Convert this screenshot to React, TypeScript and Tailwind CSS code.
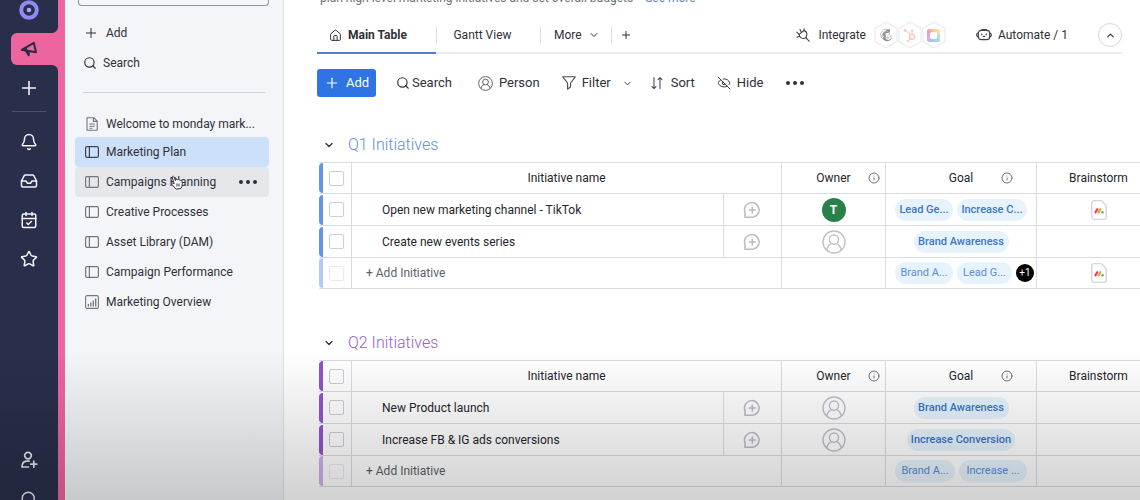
import type { ReactNode } from "react";
import {
  Bell,
  CalendarCheck,
  ChevronDown,
  ChevronUp,
  EyeOff,
  House,
  Inbox,
  Info,
  Plus,
  Search,
  Star,
} from "lucide-react";
import { FaHubspot, FaMailchimp } from "react-icons/fa";

type Goal = { label: string; width: string };

type Item = {
  name: string;
  owner?: string;
  goals: Goal[];
  doc?: boolean;
};

type Group = {
  title: string;
  titleColor: string;
  bar: string;
  barFaded: string;
  items: Item[];
  summary: Goal[];
  extra?: string;
  summaryDoc?: boolean;
};

const GROUPS: Group[] = [
  {
    title: "Q1 Initiatives",
    titleColor: "text-[#5c8fe6]",
    bar: "bg-[#6494e6]",
    barFaded: "bg-[#b1cbf8]",
    items: [
      {
        name: "Open new marketing channel - TikTok",
        owner: "T",
        goals: [
          { label: "Lead Ge...", width: "w-[58px]" },
          { label: "Increase C...", width: "w-[70px]" },
        ],
        doc: true,
      },
      {
        name: "Create new events series",
        goals: [{ label: "Brand Awareness", width: "w-[95px]" }],
      },
    ],
    summary: [
      { label: "Brand A...", width: "w-[58px]" },
      { label: "Lead G...", width: "w-[55px]" },
    ],
    extra: "+1",
    summaryDoc: true,
  },
  {
    title: "Q2 Initiatives",
    titleColor: "text-[#9560cf]",
    bar: "bg-[#8f55cb]",
    barFaded: "bg-[#cdb0ea]",
    items: [
      {
        name: "New Product launch",
        goals: [{ label: "Brand Awareness", width: "w-[95px]" }],
      },
      {
        name: "Increase FB & IG ads conversions",
        goals: [{ label: "Increase Conversion", width: "w-[108px]" }],
      },
    ],
    summary: [
      { label: "Brand A...", width: "w-[60px]" },
      { label: "Increase ...", width: "w-[68px]" },
    ],
  },
];

function MegaphoneIcon() {
  return (
    <svg width="18" height="18" viewBox="0 0 18 18" fill="none" stroke="#2b2b45" strokeWidth="2" strokeLinejoin="round" strokeLinecap="round">
      <path d="M1.8 9.8 13.8 2.8 16 12.2Z" />
      <path d="M6.3 11.5 8.7 15.2 8.8 11.8" />
      <path d="M1.8 9.8 6.2 7.2 7 11Z" fill="#2b2b45" strokeWidth="1" />
    </svg>
  );
}

function UserAddIcon() {
  return (
    <svg width="18" height="18" viewBox="0 0 18 18" fill="none" stroke="#e6e7ee" strokeWidth="1.7" strokeLinecap="round" strokeLinejoin="round">
      <circle cx="8" cy="4.6" r="3.3" />
      <path d="M8.5 16H2c0-3.4 1.6-5.7 4.6-5.9h2.6M13.8 10.2v6M10.8 13.2h6" />
    </svg>
  );
}

function BoardIcon({ active }: { active?: boolean }) {
  return (
    <svg width="14" height="12" viewBox="0 0 14 12" fill="none" stroke={active ? "#3a4152" : "#73767f"} strokeWidth="1.2">
      <rect x=".6" y=".6" width="12.8" height="10.8" rx="1.3" />
      <path d="M4.4.6v10.8" />
    </svg>
  );
}

function DocIcon() {
  return (
    <svg width="14" height="14" viewBox="0 0 14 14" fill="none" stroke="#73767f" strokeWidth="1.1" strokeLinejoin="round">
      <path d="M2 .7h6.6L12.2 4v9.3H2ZM8.4.9v3.5H12M4.4 7h5.4M4.4 9.2h5.4M4.4 11.2h3" />
    </svg>
  );
}

function DashboardIcon() {
  return (
    <svg width="14" height="14" viewBox="0 0 14 14" fill="none" stroke="#73767f" strokeWidth="1.1">
      <rect x=".6" y=".6" width="12.8" height="12.8" rx="1.5" />
      <path d="M3.4 11.4V9M5.8 11.4V7.4M8.3 11.4V5.4M10.7 11.4V3.4" strokeWidth="1.3" />
    </svg>
  );
}

function PersonIcon({ size, color }: { size: number; color: string }) {
  return (
    <svg width={size} height={size} viewBox="0 0 24 24" fill="none" stroke={color} strokeWidth="1.4">
      <circle cx="12" cy="12" r="11" />
      <circle cx="12" cy="9.6" r="4.6" />
      <path d="M4.8 20.2c.6-3.4 2.3-5.6 4.8-6.5M19.2 20.2c-.6-3.4-2.3-5.6-4.8-6.5" />
    </svg>
  );
}

function FilterIcon() {
  return (
    <svg width="14" height="14" viewBox="0 0 14 14" fill="none" stroke="#4b4d55" strokeWidth="1.1" strokeLinejoin="round">
      <path d="M.8.8h12.4L8.6 7v3.8L5.6 13.2V7Z" />
    </svg>
  );
}

function SortIcon() {
  return (
    <svg width="12" height="14" viewBox="0 0 12 14" fill="none" stroke="#4b4d55" strokeWidth="1.1" strokeLinecap="round" strokeLinejoin="round">
      <path d="M3 1.6v10.8M1 10.6l2 1.9 2-1.9M9 12.6V1.8M7 3.6l2-2 2 2" />
    </svg>
  );
}

function PlugIcon() {
  return (
    <svg width="14" height="14" viewBox="0 0 14 14" fill="none" stroke="#3f4149" strokeWidth="1.1" strokeLinecap="round" strokeLinejoin="round">
      <path d="M10 9.8 13.2 13.2" />
      <path d="M3.2 6.4 7.8 2.6c2.4.4 3.4 2.2 3 4.2L10 9.8c-1.800.9-3.400 1-4.800.1C3.900 9 3.200 7.800 3.200 6.400Z" />
      <path d="M4 1.400 5.400 4.400M.8 4.200 3.200 6.400M1 9.200 3.600 8.200M7.800 2.600 8.200.8" />
    </svg>
  );
}

function RobotIcon() {
  return (
    <svg width="16" height="12" viewBox="0 0 16 12" fill="none" stroke="#3f4149" strokeWidth="1.2" strokeLinecap="round">
      <rect x="2.3" y="1.3" width="11.4" height="9.4" rx="3" />
      <path d="M2.2 4.2C.9 4.4.7 5 .7 6s.2 1.6 1.5 1.8M13.8 4.2c1.3.2 1.5.8 1.5 1.8s-.2 1.6-1.5 1.8M5 1.2c.6-.6 1.2-.6 2-.6h2c.8 0 1.4 0 2 .6" />
      <path d="M5.7 5v.8M10.3 5v.8M7.3 7.3h1.4" />
    </svg>
  );
}

function CommentIcon() {
  return (
    <svg width="18" height="18" viewBox="0 0 18 18" fill="none" stroke="#b9bbc4" strokeWidth="1.5" strokeLinecap="round" strokeLinejoin="round">
      <path d="M2 16.2V11.600A7.300 7.300 0 1 1 9.300 16.200ZM9.300 5.900v6.200M6.200 9h6.200" />
    </svg>
  );
}

function MondayDocIcon() {
  return (
    <svg width="16" height="20" viewBox="0 0 16 20" fill="none" strokeLinecap="round">
      <path d="M2.5.7h7.8l4.9 5V17.5a1.8 1.8 0 0 1-1.8 1.8H2.5A1.8 1.8 0 0 1 .8 17.5v-15A1.8 1.8 0 0 1 2.5.7Z" fill="#fff" stroke="#c9cad2" strokeWidth="1.1" />
      <path d="M4.4 12.4 6.3 9.2" stroke="#e2445c" strokeWidth="2.2" />
      <path d="M7.6 12.4 9.4 9.2" stroke="#f59a2d" strokeWidth="2.2" />
      <circle cx="11.5" cy="12.2" r="1.2" fill="#2ebc70" />
    </svg>
  );
}

function Hexagon({ children }: { children: ReactNode }) {
  return (
    <span className="grid h-7 w-6 place-items-center">
      <svg className="col-start-1 row-start-1" width="24" height="28" viewBox="0 0 24 28" fill="#fff" stroke="#e9eaef" strokeWidth="1.1" strokeLinejoin="round">
        <path d="M12 1.2 23 7.3v13.4L12 26.8 1 20.7V7.3Z" />
      </svg>
      <span className="z-10 col-start-1 row-start-1">{children}</span>
    </span>
  );
}

function PaletteIcon() {
  return (
    <span className="flex size-[13px] items-center justify-center rounded-xs bg-[conic-gradient(#fbb552,#f3d27a,#8fd6c0,#6cbdf6,#8a9cf5,#c07ff0,#f0629a,#fbb552)] opacity-65">
      <span className="size-[7px] rounded-xs bg-white" />
    </span>
  );
}

function HandCursor() {
  return (
    <svg width="12" height="15" viewBox="0 0 12 15" fill="#fff" stroke="#33353d" strokeWidth="1" strokeLinejoin="round">
      <path d="M3.2 8.6 1.2 2.3C.9 1.2 2.3.7 2.8 1.7l1.7 4 .6-1.2c.6-.4 1.2-.2 1.4.3.6-.5 1.3-.3 1.6.3.7-.4 1.4 0 1.6.6.7-.2 1.3.2 1.4 1 .3 2.3.2 4.3-1.2 6.8l-4.9.6C3.8 12.6 2 11 .8 9.3c-.4-.9.6-1.5 1.3-1Z" />
      <path d="M6 8.5v3M8 8.5v3" />
    </svg>
  );
}

function Dots() {
  return (
    <span className="flex gap-[3px]">
      <span className="size-1 rounded-full bg-[#2f3138]" />
      <span className="size-1 rounded-full bg-[#2f3138]" />
      <span className="size-1 rounded-full bg-[#2f3138]" />
    </span>
  );
}

function Rail() {
  const links = [
    { label: "Notifications", icon: <Bell size={18} strokeWidth={2} /> },
    { label: "Inbox", icon: <Inbox size={18} strokeWidth={2} /> },
    { label: "My work", icon: <CalendarCheck size={18} strokeWidth={2} /> },
    { label: "Favorites", icon: <Star size={18} strokeWidth={2} /> },
  ];

  return (
    <nav aria-label="Workspaces" className="flex w-[65px] shrink-0 flex-col border-r-[7px] border-[#ec659f] bg-[#292e4b] text-[#f4f4f8]">
      <button aria-label="Home" className="flex h-5 justify-center">
        <svg width="20" height="20" viewBox="0 0 20 20">
          <circle cx="10" cy="10" r="7.8" fill="none" stroke="#8f8bf5" strokeWidth="4" />
          <circle cx="10" cy="10" r="2.3" fill="#a9a6fa" />
        </svg>
      </button>
      <div className="relative mt-[13px] pl-[11px]">
        <button aria-label="Marketing" className="flex h-8 w-full items-center rounded-l-md bg-[#ec659f] pl-[9px]">
          <MegaphoneIcon />
        </button>
        {/* inverted corners joining the active tab to the edge */}
        <svg className="absolute right-0 bottom-full" width="6" height="6" fill="#ec659f">
          <path d="M6 0v6H0a6 6 0 0 0 6-6Z" />
        </svg>
        <svg className="absolute top-full right-0" width="6" height="6" fill="#ec659f">
          <path d="M6 6V0H0a6 6 0 0 1 6 6Z" />
        </svg>
      </div>
      <button aria-label="Add workspace" className="flex h-[46px] items-center justify-center">
        <Plus size={22} strokeWidth={1.7} />
      </button>
      <hr className="mr-3 ml-3 border-[#4b5070]" />
      <div className="mt-[10px] flex flex-col">
        {links.map((l) => (
          <button key={l.label} aria-label={l.label} className="flex h-[39px] items-center justify-center">
            {l.icon}
          </button>
        ))}
      </div>
      <div className="mt-auto -mb-[18px] flex flex-col text-[#e6e7ee]">
        <button aria-label="Invite members" className="flex h-[39px] items-center justify-center">
          <UserAddIcon />
        </button>
        <button aria-label="Search everything" className="flex h-[39px] items-center justify-center">
          <Search size={18} />
        </button>
      </div>
    </nav>
  );
}

function Sidebar() {
  const boards = [
    { label: "Campaigns Planning", hovered: true },
    { label: "Creative Processes" },
    { label: "Asset Library (DAM)" },
    { label: "Campaign Performance" },
  ];

  return (
    <aside className="flex w-[219px] shrink-0 flex-col border-r border-l border-r-[#dfe1e6] border-l-white bg-[#f4f5f8] text-xs text-[#2f3138]">
      <button aria-label="Choose workspace" className="mr-[14px] ml-[12px] h-[6px] rounded-b border border-t-0 border-[#8f929c]" />
      <button className="mt-3 ml-[17px] flex h-[30px] items-center gap-[7px]">
        <Plus size={16} strokeWidth={1.5} />
        Add
      </button>
      <button className="ml-[17px] flex h-[30px] items-center gap-[6px]">
        <Search size={14} strokeWidth={2} />
        Search
      </button>
      <hr className="mt-[14px] mr-[18px] ml-[17px] border-[#d0d2da]" />
      <ul className="mt-[17px] mr-[14px] ml-[9px]">
        <li>
          <a href="#welcome" className="flex h-[27px] items-center gap-[7px] pl-[10px] whitespace-nowrap">
            <DocIcon />
            Welcome to monday mark...
          </a>
        </li>
        <li>
          <a href="#plan" className="flex h-[30px] items-center gap-[7px] rounded bg-[#cde0fa] pl-[10px]">
            <BoardIcon active />
            Marketing Plan
          </a>
        </li>
        {boards.map((b) => (
          <li key={b.label} className={b.hovered ? "relative flex rounded bg-[#e6e7eb]" : "flex"}>
            <a href="#board" className="flex h-[30px] flex-1 items-center gap-[7px] pl-[10px]">
              <BoardIcon />
              {b.label}
            </a>
            {b.hovered && (
              <>
                <button aria-label="Board options" className="pr-3">
                  <Dots />
                </button>
                <span className="pointer-events-none absolute top-2 left-24">
                  <HandCursor />
                </span>
              </>
            )}
          </li>
        ))}
        <li>
          <a href="#overview" className="flex h-[30px] items-center gap-[7px] pl-[10px]">
            <DashboardIcon />
            Marketing Overview
          </a>
        </li>
      </ul>
    </aside>
  );
}

function ViewTabs() {
  return (
    <div className="mr-[18px] flex h-9 border-b-2 border-[#ebecf0] text-xs text-[#2f3138]">
      <button className="-mb-[2px] flex w-[119px] items-center gap-[6px] border-b-2 border-[#4a80d8] pl-3 font-bold">
        <House size={13} strokeWidth={1.8} />
        Main Table
      </button>
      <div className="flex items-center">
        <button className="h-4 w-[104px] border-l border-[#dcdee4] pr-3 leading-4">Gantt View</button>
        <button className="flex h-4 w-[71px] items-center gap-[6px] border-l border-[#dcdee4] pl-[13px]">
          More
          <ChevronDown size={12} />
        </button>
        <button aria-label="Add view" className="flex h-4 items-center border-l border-[#dcdee4] pl-2">
          <Plus size={12} strokeWidth={2} />
        </button>
      </div>
      <div className="ml-auto flex items-center">
        <button className="flex items-center gap-2">
          <PlugIcon />
          Integrate
          <span className="flex">
            <Hexagon>
              <FaMailchimp size={14} color="#8e9096" />
            </Hexagon>
            <Hexagon>
              <FaHubspot size={13} color="#fbc4b2" />
            </Hexagon>
            <Hexagon>
              <PaletteIcon />
            </Hexagon>
          </span>
        </button>
        <button className="ml-[30px] flex items-center gap-[6px]">
          <RobotIcon />
          Automate / 1
        </button>
        <button aria-label="Collapse header" className="ml-[30px] flex size-6 items-center justify-center rounded-full border border-[#d6d8de]">
          <ChevronUp size={11} strokeWidth={2.5} />
        </button>
      </div>
    </div>
  );
}

function Toolbar() {
  return (
    <div className="mt-[15px] flex h-7 items-center text-[#2f3138]">
      <button className="flex h-7 w-[59px] items-center gap-[6px] rounded-[3px] bg-[#2f74e4] pl-[7px] text-white">
        <Plus size={16} strokeWidth={1.8} />
        Add
      </button>
      <button className="ml-5 flex items-center gap-[2px]">
        <Search size={14} />
        Search
      </button>
      <button className="ml-[26px] flex items-center gap-[6px]">
        <PersonIcon size={15} color="#4b4d55" />
        Person
      </button>
      <button className="ml-[22px] flex items-center gap-[6px]">
        <FilterIcon />
        Filter
      </button>
      <button aria-label="Filter options" className="ml-[11px]">
        <ChevronDown size={11} />
      </button>
      <button className="ml-[18px] flex items-center gap-2">
        <SortIcon />
        Sort
      </button>
      <button className="ml-[22px] flex items-center gap-[6px]">
        <EyeOff size={14} strokeWidth={1.6} />
        Hide
      </button>
      <button aria-label="More actions" className="ml-[22px]">
        <Dots />
      </button>
    </div>
  );
}

function Tag({ goal, faded }: { goal: Goal; faded?: boolean }) {
  return (
    <span
      className={`${goal.width} ${faded ? "text-[#5b8dd4]" : "font-medium text-[#3b76cb]"} h-[22px] shrink-0 rounded-full bg-[#e6f3fd] text-center text-[11px] leading-[22px] whitespace-nowrap`}
    >
      {goal.label}
    </span>
  );
}

function SelectCell({ label, bar, faded }: { label: string; bar: string; faded?: boolean }) {
  return (
    <td className="border-r border-b border-[#d9dbe4] p-0">
      <div className="flex h-[30px] items-center">
        <span className={`${bar} h-full w-1 rounded-l-sm`} />
        <input
          type="checkbox"
          aria-label={label}
          className={`${faded ? "border-[#e9eaee]" : "border-[#cccdd5]"} ml-[6px] size-[15px] appearance-none rounded-xs border`}
        />
      </div>
    </td>
  );
}

function HeaderCell({ children, info }: { children: ReactNode; info?: string }) {
  return (
    <th className="border-r border-b border-[#d9dbe4] p-0 font-normal">
      <div className="relative">
        {children}
        {info && <Info size={12} className={`${info} absolute top-[2px] text-[#6d7079]`} />}
      </div>
    </th>
  );
}

const CELL = "border-r border-b border-[#d9dbe4] p-0";

function GroupTable({ group }: { group: Group }) {
  return (
    <section className="mb-[42px]">
      <h2 className={`${group.titleColor} flex h-6 items-center gap-[13px] pl-[6px] text-base font-light`}>
        <button aria-label={`Collapse ${group.title}`} className="text-[#2f3138]">
          <ChevronDown size={12} strokeWidth={2.5} />
        </button>
        {group.title}
      </h2>
      <table className="mt-[5px] ml-[2px] w-[calc(100%+19px)] table-fixed border-separate border-spacing-0 border-t border-[#d9dbe4] text-xs text-[#24262c]">
        <colgroup>
          <col className="w-[33px]" />
          <col />
          <col className="w-[58px]" />
          <col className="w-[104px]" />
          <col className="w-[151px]" />
          <col className="w-[124px]" />
        </colgroup>
        <thead>
          <tr className="h-[31px]">
            <SelectCell label={`Select all in ${group.title}`} bar={group.bar} />
            <th colSpan={2} className="border-r border-b border-[#d9dbe4] p-0 font-normal">
              Initiative name
            </th>
            <HeaderCell info="right-[5px]">Owner</HeaderCell>
            <HeaderCell info="right-[23px]">Goal</HeaderCell>
            <HeaderCell>Brainstorm</HeaderCell>
          </tr>
        </thead>
        <tbody>
          {group.items.map((item) => (
            <tr key={item.name} className="h-8">
              <SelectCell label={`Select ${item.name}`} bar={group.bar} />
              <td className={`${CELL} pl-[30px]`}>{item.name}</td>
              <td className={CELL}>
                <button aria-label="Start conversation" className="flex w-full justify-center">
                  <CommentIcon />
                </button>
              </td>
              <td className={CELL}>
                <div className="flex justify-center">
                  {item.owner ? (
                    <span className="size-6 rounded-full bg-[#2a804a] text-center text-xs leading-6 font-bold text-white">{item.owner}</span>
                  ) : (
                    <PersonIcon size={24} color="#c0c2ca" />
                  )}
                </div>
              </td>
              <td className={CELL}>
                <div className="flex justify-center gap-1">
                  {item.goals.map((g) => (
                    <Tag key={g.label} goal={g} />
                  ))}
                </div>
              </td>
              <td className={CELL}>
                <div className="flex justify-center">{item.doc && <MondayDocIcon />}</div>
              </td>
            </tr>
          ))}
          <tr className="h-[31px]">
            <SelectCell label="Select new initiative" bar={group.barFaded} faded />
            <td colSpan={2} className={`${CELL} pl-[14px] text-[#5c5f69]`}>
              <button>+ Add Initiative</button>
            </td>
            <td className={CELL} />
            <td className={CELL}>
              <div className="flex items-center gap-1 pl-[9px]">
                {group.summary.map((g) => (
                  <Tag key={g.label} goal={g} faded />
                ))}
                {group.extra && (
                  <span className="size-[18px] shrink-0 rounded-full bg-black text-center text-[10px] leading-[18px] text-white">{group.extra}</span>
                )}
              </div>
            </td>
            <td className={CELL}>
              <div className="flex justify-center">{group.summaryDoc && <MondayDocIcon />}</div>
            </td>
          </tr>
        </tbody>
      </table>
    </section>
  );
}

export default function App() {
  return (
    <div className="relative flex h-screen overflow-hidden bg-white font-[Roboto,sans-serif] text-[13px] leading-5 text-[#3a3c44]">
      <Rail />
      <Sidebar />
      <main className="min-w-0 flex-1 overflow-hidden pl-[33px]">
        <div className="flex h-[6px] items-end overflow-hidden">
          <p className="pl-[3px] text-xs leading-4 whitespace-nowrap text-[#6d7079]">
            plan high level marketing initiatives and set overall budgets
            <a href="#more" className="ml-3 text-[#5f82b8]">
              See more
            </a>
          </p>
        </div>
        <div className="mt-3">
          <ViewTabs />
        </div>
        <Toolbar />
        <div className="mt-9">
          {GROUPS.map((g) => (
            <GroupTable key={g.title} group={g} />
          ))}
        </div>
      </main>
      {/* fade at the bottom of the window */}
      <div className="pointer-events-none absolute inset-x-0 bottom-0 h-[150px] bg-linear-to-b from-transparent to-black/18" />
    </div>
  );
}
